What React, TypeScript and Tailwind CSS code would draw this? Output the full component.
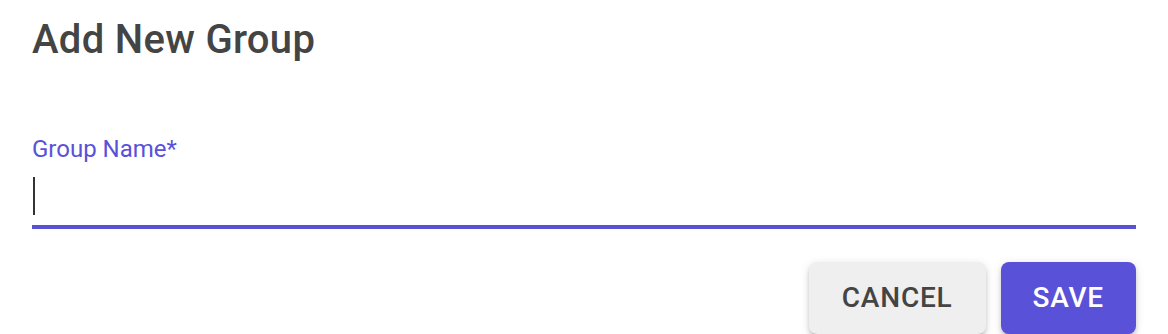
import React from "react";

export default function App() {
  return (
    <div className="w-[1168px] h-[334px] bg-white overflow-hidden" style={{ fontFamily: "Roboto, 'Liberation Sans', sans-serif" }}>
      <div className="px-[32px] pt-[8px]">
        <h2 className="h-[64px] leading-[64px] text-[40px] font-medium text-[#444444] tracking-[0.3px]">Add New Group</h2>
        <div className="mt-[65px] h-[24px] leading-[24px] text-[24px] text-[#5a51d9]">Group Name*</div>
        <div className="pt-[16px] pb-[10px] border-b-[4px] border-[#5a51d9]">
          <div className="w-[2px] h-[38px] bg-[#333333] ml-[1px]" />
        </div>
        <div className="mt-[33px] flex justify-end gap-[15px]">
          <button className="h-[72px] px-[33px] rounded-[8px] bg-[#efefef] text-[#444444] text-[28px] font-medium tracking-[0.8px] uppercase shadow-[0_6px_2px_-4px_rgba(0,0,0,0.2),0_4px_4px_0_rgba(0,0,0,0.14),0_2px_10px_0_rgba(0,0,0,0.12)]">
            Cancel
          </button>
          <button className="h-[72px] px-[32px] rounded-[8px] bg-[#5a51d9] text-white text-[28px] font-medium tracking-[0.8px] uppercase shadow-[0_6px_2px_-4px_rgba(0,0,0,0.2),0_4px_4px_0_rgba(0,0,0,0.14),0_2px_10px_0_rgba(0,0,0,0.12)]">
            Save
          </button>
        </div>
      </div>
    </div>
  );
}
